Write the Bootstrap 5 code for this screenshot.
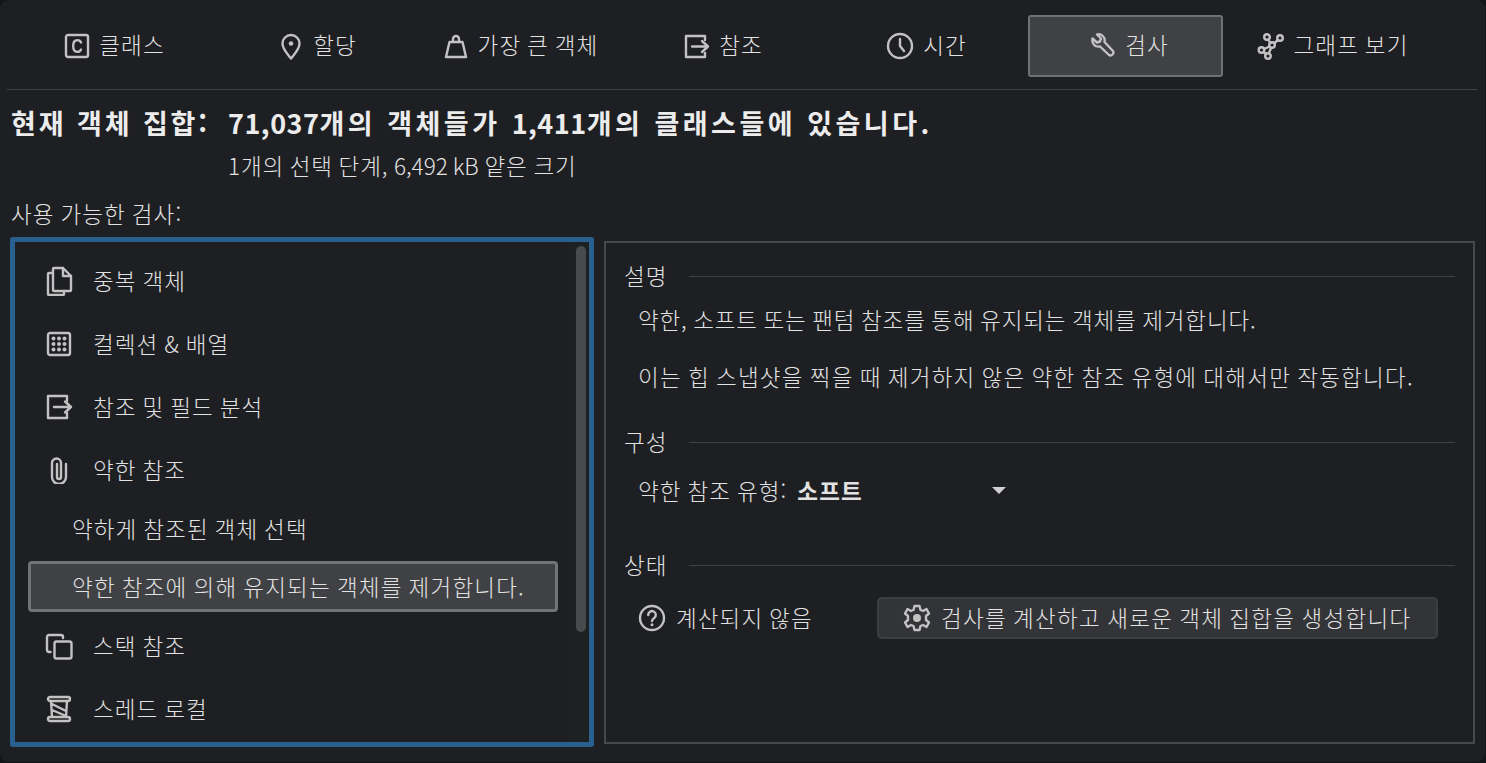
<!DOCTYPE html>
<html lang="ko"><head><meta charset="utf-8"><title>검사</title>
<link href="https://cdn.jsdelivr.net/npm/bootstrap@5.3.0/dist/css/bootstrap.min.css" rel="stylesheet">
<style>
html,body{height:763px;overflow:hidden;background:#141517}
body{color:#e2e2e2;font-family:"Noto Sans CJK KR","Liberation Sans",sans-serif;font-size:22.5px;letter-spacing:1.1px;word-spacing:-1.5px;line-height:30px;font-weight:300}
svg{fill:none;stroke:#c2c2c2;stroke-width:2.4;stroke-linecap:round;stroke-linejoin:round;flex:none}
.shell{background:#1e1f22;height:762px;width:1485px;border-radius:9px;padding-top:15px}
.tabstrip{gap:8px;padding-left:13px;height:62px}
.tabitem{width:195px;white-space:nowrap;gap:9px;padding-left:8px}
.tabitem span{padding-bottom:5px}
.tabitem.on{background:#404144;border:2px solid #707173;border-radius:3px}
.tabrule{border-top:1px solid #404144;margin:12px 0 0 7px;width:1470px}
.topblock{padding-left:11px}
.headline{font-size:27px;letter-spacing:3.5px;word-spacing:0;font-weight:700;color:#ececec;line-height:34px;margin-top:16px}
.headlabel{width:217px;letter-spacing:2.9px}
.numtight{letter-spacing:.5px}
.subline{margin:10px 0 0 217px;line-height:30px;letter-spacing:.85px;word-spacing:-1.4px}
.subnum{letter-spacing:0}
.avail{margin-top:18px;letter-spacing:1.1px}
.panes{gap:10px;margin:9px 0 0 10px;align-items:flex-start}
.leftpane{width:584px;height:510px;border:5px solid #28608f;border-radius:3px;padding:7px 0 0 13px;position:relative;overflow:hidden}
.rightpane{width:871px;height:503px;margin-top:4px;border:2px solid #47484a;padding:17px 18px 0 18px}
.navrow{height:63px;gap:20px;padding-left:17px}
.navrow span,.subrow span,.stat span,.para span,.grouphead span{padding-bottom:2px}
.subrow{height:56px;padding-left:44px;margin-bottom:4px;width:530px}
.subrow.on{background:#404144;border:3px solid #727375;border-radius:4px;height:51px;padding-left:41px;margin-bottom:2px;letter-spacing:1.2px}
.rail{position:absolute;right:3px;top:4px;width:10px;height:386px;background:#474b4e;border-radius:6px}
.railbg{position:absolute;right:0;top:0;bottom:0;width:17px;background:#1e2122}
.grouphead{line-height:30px}
.grouphead span{width:65px}
.grouphead i{flex:1;border-top:1px solid #404144}
.para{margin:0 0 0 14px}
.lineone{letter-spacing:.85px;margin-top:12px}
.linetwo{letter-spacing:1.25px;margin-top:27px}
.gapa{margin-top:35px}
.gapb{margin-top:17px}
.gapc{margin-top:42px}
.gapd{margin-top:16px}
.stat{gap:10px;margin-left:14px}
.actbtn{background:#333437;border:2px solid #3d3e41;border-radius:5px;width:561px;height:42px;gap:10px;margin-left:54px;color:#e2e2e2;font-weight:300;padding:0;letter-spacing:1.3px;word-spacing:-1.5px}
.softval{margin-left:10px;font-weight:700}
.dropcaret{width:0;height:0;border-left:7px solid transparent;border-right:7px solid transparent;border-top:7px solid #d0d0d0;margin-left:129px}
.iconfill{fill:#c2c2c2;stroke:none}
</style></head><body>
<div class="shell">
<div class="d-flex tabstrip">
 <div class="tabitem d-flex align-items-center justify-content-center"><svg width="26" height="26" viewBox="0 0 26 26"><rect x="2" y="2" width="22" height="22" rx="2"/><path d="M17 9.500a3.800 3.800 0 0 0-4-2.300c-2.400 0-3.800 2-3.800 5.800s1.400 5.800 3.800 5.800a3.800 3.800 0 0 0 4-2.300"/></svg><span>클래스</span></div>
 <div class="tabitem d-flex align-items-center justify-content-center"><svg width="26" height="28" viewBox="0 0 26 28"><path d="M13 26.500c-3.500-4.800-8.500-9-8.500-15a8.500 8.500 0 0 1 17 0c0 6-5 10.200-8.500 15z"/><circle cx="13" cy="11.500" r="2.300" class="iconfill"/></svg><span>할당</span></div>
 <div class="tabitem d-flex align-items-center justify-content-center"><svg width="26" height="26" viewBox="0 0 26 26"><path d="M6.500 9h13l3.500 15H3z"/><path d="M10 9V6a3 3 0 0 1 6 0v3"/></svg><span>가장 큰 객체</span></div>
 <div class="tabitem d-flex align-items-center justify-content-center"><svg width="26" height="26" viewBox="0 0 26 26"><path d="M21 7V3H2v21h19v-4"/><path d="M8 13.500h16M18 8l6 5.500-6 5.500"/></svg><span>참조</span></div>
 <div class="tabitem d-flex align-items-center justify-content-center"><svg width="28" height="28" viewBox="0 0 28 28"><circle cx="14" cy="14" r="12"/><path d="M14 7v7l4 5"/></svg><span>시간</span></div>
 <div class="tabitem on d-flex align-items-center justify-content-center"><svg width="26" height="26" viewBox="0 0 26 26"><path d="M2.500 5.500l4.500 4 3-1 1-3-4-4c4.500-1 8.500 2.500 7.500 7.500l8.500 9c1.500 2.500-1.500 5.500-4 4l-9-8.500c-5 1-8.500-3-7.500-8z"/></svg><span>검사</span></div>
 <div class="tabitem d-flex align-items-center justify-content-center"><svg width="28" height="28" viewBox="0 0 28 28"><circle cx="10" cy="5" r="2.800"/><circle cx="23" cy="6" r="2.800"/><circle cx="15" cy="13" r="2.800"/><circle cx="4.500" cy="18" r="2.800"/><circle cx="11" cy="24" r="2.800"/><path d="M11 8l3 3M17.500 11l3.500-3M12.500 14.500l-5.500 2.500M14 16l-2 5M6.500 20l2.500 2"/></svg><span>그래프 보기</span></div>
</div>
<div class="tabrule"></div>
<div class="topblock">
 <div class="headline d-flex"><span class="headlabel">현재 객체 집합:</span><span><span class="numtight">71,037</span>개의 객체들가 <span class="numtight">1,411</span>개의 클래스들에 있습니다.</span></div>
 <div class="subline">1개의 선택 단계, <span class="subnum">6,492 kB</span> 얕은 크기</div>
 <div class="avail">사용 가능한 검사:</div>
</div>
<div class="d-flex panes">
 <div class="leftpane">
  <div class="railbg"></div><div class="rail"></div>
  <div class="navrow d-flex align-items-center"><svg width="28" height="30" viewBox="0 0 28 30"><path d="M9 2h9l8 8v14a1 1 0 0 1-1 1H9a1 1 0 0 1-1-1V3a1 1 0 0 1 1-1z"/><path d="M18 2v8h8"/><path d="M8 7H4a1 1 0 0 0-1 1v20a1 1 0 0 0 1 1h14a1 1 0 0 0 1-1v-3"/></svg><span>중복 객체</span></div>
  <div class="navrow d-flex align-items-center"><svg width="28" height="28" viewBox="0 0 28 28"><rect x="3" y="3" width="22" height="22" rx="2"/><g class="iconfill"><circle cx="8.500" cy="8.500" r="2"/><circle cx="14" cy="8.500" r="2"/><circle cx="19.500" cy="8.500" r="2"/><circle cx="8.500" cy="14" r="2"/><circle cx="14" cy="14" r="2"/><circle cx="19.500" cy="14" r="2"/><circle cx="8.500" cy="19.500" r="2"/><circle cx="14" cy="19.500" r="2"/><circle cx="19.500" cy="19.500" r="2"/></g></svg><span>컬렉션 &amp; 배열</span></div>
  <div class="navrow d-flex align-items-center"><svg width="28" height="28" viewBox="0 0 28 28"><path d="M22 8V3H3v22h19v-5"/><path d="M9 14h17M20 8.500l6 5.500-6 5.500"/></svg><span>참조 및 필드 분석</span></div>
  <div class="navrow d-flex align-items-center"><svg width="28" height="28" viewBox="0 0 28 28"><path d="M21 8v13a7 7 0 0 1-14 0V7a4.500 4.500 0 0 1 9 0v14a2 2 0 0 1-4 0V8"/></svg><span>약한 참조</span></div>
  <div class="subrow d-flex align-items-center"><span>약하게 참조된 객체 선택</span></div>
  <div class="subrow on d-flex align-items-center"><span>약한 참조에 의해 유지되는 객체를 제거합니다.</span></div>
  <div class="navrow d-flex align-items-center"><svg width="28" height="28" viewBox="0 0 28 28"><rect x="9.500" y="9.500" width="17" height="17" rx="2"/><path d="M5.500 20H4a2 2 0 0 1-2-2V5a2 2 0 0 1 2-2h12a2 2 0 0 1 2 2v1"/></svg><span>스택 참조</span></div>
  <div class="navrow d-flex align-items-center"><svg width="28" height="28" viewBox="0 0 28 28"><rect x="3" y="2" width="22" height="4" rx="2"/><rect x="3" y="22" width="22" height="4" rx="2"/><path d="M6 6l1 16M22 6l-1 16M7 9l14 7M7 15l14 6"/></svg><span>스레드 로컬</span></div>
 </div>
 <div class="rightpane">
  <div class="grouphead d-flex align-items-center"><span>설명</span><i></i></div>
  <p class="para lineone">약한, 소프트 또는 팬텀 참조를 통해 유지되는 객체를 제거합니다.</p>
  <p class="para linetwo">이는 힙 스냅샷을 찍을 때 제거하지 않은 약한 참조 유형에 대해서만 작동합니다.</p>
  <div class="grouphead d-flex align-items-center gapa"><span>구성</span><i></i></div>
  <div class="para d-flex align-items-center gapb"><span>약한 참조 유형:</span><span class="softval">소프트</span><span class="dropcaret"></span></div>
  <div class="grouphead d-flex align-items-center gapc"><span>상태</span><i></i></div>
  <div class="stat d-flex align-items-center gapd"><svg width="28" height="28" viewBox="0 0 28 28"><circle cx="14" cy="14" r="12"/><path d="M10.200 11a3.800 3.800 0 1 1 6 3c-1.500 1-2.200 1.500-2.200 3"/><circle cx="14" cy="20.800" r="1.500" class="iconfill"/></svg><span>계산되지 않음</span>
   <button class="actbtn d-flex align-items-center justify-content-center" type="button"><svg width="28" height="28" viewBox="0 0 28 28"><circle cx="14" cy="14" r="4" class="iconfill"/><path d="M11.500 2h5l1 4 2.500 1 3.500-2 2.500 4.500-3 2.500v4l3 2.500-2.500 4.500-3.500-2-2.500 1-1 4h-5l-1-4-2.500-1-3.500 2L2 18.500 5 16v-4L2 9.500 4.500 5 8 7l2.500-1z"/></svg><span>검사를 계산하고 새로운 객체 집합을 생성합니다</span></button>
  </div>
 </div>
</div>
</div>
<script src="https://cdn.jsdelivr.net/npm/bootstrap@5.3.0/dist/js/bootstrap.bundle.min.js"></script>
</body></html>
